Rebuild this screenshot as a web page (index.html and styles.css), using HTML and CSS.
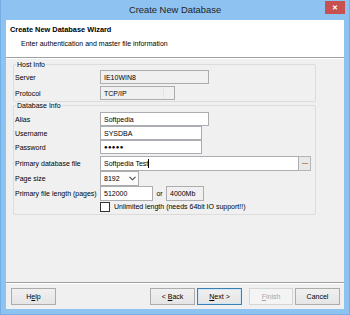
FILE: index.html
```html
<!DOCTYPE html>
<html lang="en">
	<head>
		<meta charset="utf-8" />
		<title>Create New Database</title>
		<link rel="stylesheet" href="styles.css">
	</head>
	<body>
		<div id="window">
			<div class="titlebar">
				<span></span>
				<span class="title">Create New Database</span>
				<span class="controls"><span class="close">&#x2715;</span></span>
			</div>
			<div class="client">
				<div class="header">
					<div class="heading">Create New Database Wizard</div>
					<div class="subheading">Enter authentication and master file information</div>
				</div>
				<div class="content">
					<div class="group host">
						<div class="legend">Host Info</div>
						<div class="row h14">
							<span class="label">Server</span>
							<span class="field readonly w109">IE10WIN8</span>
						</div>
						<div class="row h14 gap2">
							<span class="label">Protocol</span>
							<span class="field readonly combo-off w75">TCP/IP<span class="drop-off"></span></span>
						</div>
					</div>
					<div class="group dbinfo">
						<div class="legend">Database Info</div>
						<div class="row h14">
							<span class="label">Alias</span>
							<span class="field w109">Softpedia</span>
						</div>
						<div class="row h14">
							<span class="label">Username</span>
							<span class="field w102">SYSDBA</span>
						</div>
						<div class="row h14">
							<span class="label">Password</span>
							<span class="field w102 dots">&#9679;&#9679;&#9679;&#9679;&#9679;</span>
						</div>
						<div class="row h15 gap2">
							<span class="label">Primary database file</span>
							<span class="field w200">Softpedia Test<span class="caret"></span></span>
							<span class="browse">&middot;&middot;&middot;</span>
						</div>
						<div class="row h15">
							<span class="label">Page size</span>
							<span class="field combo w39">8192<span class="chevron"><svg width="7" height="5" viewBox="0 0 7 5"><path d="M0.5 0.8 L3.5 3.8 L6.5 0.8" fill="none" stroke="#444" stroke-width="1.1"/></svg></span></span>
						</div>
						<div class="row h15">
							<span class="label">Primary file length (pages)</span>
							<span class="field w53">512000</span>
							<span class="or">or</span>
							<span class="field readonly w38">4000Mb</span>
						</div>
						<div class="row h10 gap1">
							<span class="label"></span>
							<span class="check"></span>
							<span class="check-text">Unlimited length (needs 64bit IO support!!)</span>
						</div>
					</div>
				</div>
				<div class="footer">
					<div class="btn w45">H<u>e</u>lp</div>
					<div class="btn w45 push">&lt; <u>B</u>ack</div>
					<div class="btn w45 default"><u>N</u>ext &gt;</div>
					<div class="btn w44 disabled"><u>F</u>inish</div>
					<div class="btn w45 cancel">Cancel</div>
				</div>
			</div>
		</div>
	</body>
</html>
```

FILE: styles.css
```css
body, html {
	margin:0;
	padding:0;
	font-family:"Liberation Sans", Arial, sans-serif;
}
#window {
	width:350px;
	height:315px;
	display:flex;
	flex-direction:column;
	background-color:#8ec3f1;
	box-sizing:border-box;
	border-left:1px solid #74aee3;
	border-right:1px solid #74aee3;
	border-bottom:1px solid #74aee3;
}
.titlebar {
	height:20px;
	display:grid;
	grid-template-columns:1fr auto 1fr;
	align-items:start;
}
.title {
	font-size:9.4px;
	line-height:20px;
	color:#1e1e1e;
}
.controls {
	display:flex;
	justify-content:flex-end;
	padding-right:4px;
}
.close {
	width:20px;
	height:13px;
	margin-top:1px;
	background-color:#c75050;
	color:white;
	font-size:7px;
	line-height:13px;
	text-align:center;
	font-weight:bold;
}
.client {
	flex:1;
	margin:0 5px 5px 5px;
	background-color:#f0f0f0;
	display:flex;
	flex-direction:column;
	border:0;
}
.header {
	height:37px;
	background-color:white;
	border-bottom:1px solid #a0a0a0;
	box-shadow:0 1px 0 white;
	font-size:7px;
	color:#000;
}
.heading {
	font-weight:bold;
	font-size:7.4px;
	padding:6px 0 0 4px;
	line-height:8px;
}
.subheading {
	padding:6px 0 0 15px;
	line-height:8px;
}
.content {
	flex:1;
	padding:6px 0 0 7px;
	font-size:7px;
	color:#000;
}
.group {
	width:300px;
	border:1px solid #dcdcdc;
	border-radius:2px;
	padding:0 0 1px 1px;
}
.dbinfo {
	margin-top:3px;
	padding-bottom:2px;
}
.legend {
	margin:-4px 0 0 1px;
	width:fit-content;
	padding:0 1px;
	line-height:8px;
	background-color:#f0f0f0;
}
.host .legend {
	margin-bottom:1px;
}
.dbinfo .legend {
	margin-bottom:2px;
}
.row {
	display:flex;
	align-items:stretch;
}
.h14 { height:14px; }
.h15 { height:15px; }
.h10 { height:10px; }
.gap1 { margin-top:1px; }
.gap2 { margin-top:2px; }
.label {
	width:85px;
	flex:none;
	display:flex;
	align-items:center;
	white-space:nowrap;
}
.field {
	box-sizing:border-box;
	position:relative;
	border:1px solid #abadb3;
	background-color:white;
	padding:0 3px;
	display:flex;
	align-items:center;
	white-space:nowrap;
}
.field.readonly {
	background-color:#f0f0f0;
	border-color:#adadad;
}
.combo-off {
	border-color:#d9d9d9;
}
.drop-off {
	position:absolute;
	right:10px;
	top:0;
	bottom:0;
	border-left:1px solid #e3e3e3;
}
.w109 { width:109px; }
.w102 { width:102px; }
.w75 { width:75px; }
.w200 { width:199px; }
.w39 { width:39px; }
.w53 { width:53px; }
.w38 { width:38px; }
.w45 { width:45px; }
.w44 { width:44px; }
.dots {
	font-size:6px;
	letter-spacing:0.3px;
}
.caret {
	display:inline-block;
	width:1px;
	height:9px;
	background-color:#000;
}
.browse {
	width:12px;
	box-sizing:border-box;
	border:1px solid #b5b5b5;
	border-left:0;
	background-color:#e8e8e8;
	font-size:9px;
	line-height:12px;
	text-align:center;
	color:#333;
	letter-spacing:-1px;
}
.combo {
	border-color:#acacac;
	background-color:#fcfcfc;
}
.chevron {
	position:absolute;
	right:2px;
	top:4px;
	line-height:0;
}
.or {
	width:13px;
	display:flex;
	align-items:center;
	justify-content:center;
}
.check {
	width:10px;
	height:10px;
	box-sizing:border-box;
	border:1px solid #333;
	background-color:white;
}
.check-text {
	padding-left:4px;
	line-height:10px;
	white-space:nowrap;
}
.footer {
	height:27px;
	box-sizing:border-box;
	border-top:1px solid #a0a0a0;
	box-shadow:inset 0 1px 0 white;
	padding:5px 4px 0 5px;
	display:flex;
	align-items:flex-start;
}
.btn {
	height:17px;
	box-sizing:border-box;
	border:1px solid #acacac;
	background:linear-gradient(#f0f0f0, #e5e5e5);
	font-size:7px;
	line-height:15px;
	text-align:center;
	color:#000;
}
.btn u {
	text-decoration:underline;
}
.push {
	margin-left:auto;
}
.default {
	margin-left:2px;
	border-color:#3c7fb1;
	box-shadow:inset 0 0 0 1px #cfe6f8;
}
.disabled {
	margin-left:7px;
	border-color:#d5d5d5;
	background:#f4f4f4;
	color:#a6a6a6;
}
.cancel {
	margin-left:2px;
}
```
